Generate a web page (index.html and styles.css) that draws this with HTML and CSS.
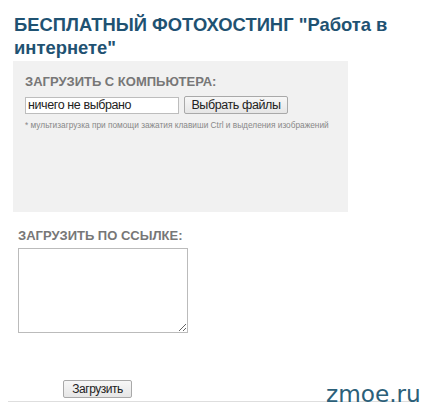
FILE: index.html
```html
<!DOCTYPE html>
<html>
<head>
<meta charset="utf-8">
<link rel="stylesheet" href="styles.css">
</head>
<body>
<div class="page">
  <h1 class="title">БЕСПЛАТНЫЙ ФОТОХОСТИНГ "Работа в интернете"</h1>
  <div class="box">
    <div class="label">ЗАГРУЗИТЬ С КОМПЬЮТЕРА:</div>
    <div class="file-row">
      <span class="file-field">ничего не выбрано</span>
      <button class="btn btn-files">Выбрать файлы</button>
    </div>
    <div class="note">* мультизагрузка при помощи зажатия клавиши Ctrl и выделения изображений</div>
  </div>
  <div class="link-section">
    <div class="label">ЗАГРУЗИТЬ ПО ССЫЛКЕ:</div>
    <textarea class="url-area"></textarea>
  </div>
  <div class="submit-row">
    <button class="btn btn-submit">Загрузить</button>
  </div>
  <div class="rule"></div>
</div>
<div class="watermark">zmoe.ru</div>
</body>
</html>
```
FILE: styles.css
```css
html, body {
  margin: 0;
  padding: 0;
  background: #fff;
}
body {
  font-family: "Liberation Sans", Arial, sans-serif;
  width: 424px;
  height: 410px;
  overflow: hidden;
  position: relative;
}
.page {
  padding: 13px 8px 0 8px;
}
.title {
  margin: 0 0 0 6px;
  font-size: 18.4px;
  line-height: 23px;
  font-weight: bold;
  color: #1f5272;
  width: 400px;
}
.box {
  margin: 2px 0 0 5px;
  width: 335px;
  height: 151px;
  box-sizing: border-box;
  background: #f1f1f1;
  padding: 13px 12px 0 12px;
}
.label {
  font-size: 13px;
  font-weight: bold;
  color: #777;
  line-height: 16px;
}
.file-row {
  display: flex;
  gap: 5px;
  margin-top: 6px;
  align-items: center;
}
.file-field {
  display: block;
  width: 154px;
  height: 17px;
  box-sizing: border-box;
  border: 1px solid #bdbdbd;
  background: #fff;
  font-size: 12.5px;
  letter-spacing: -0.4px;
  line-height: 15px;
  padding-left: 2px;
  color: #222;
  white-space: nowrap;
}
.btn {
  font-family: "Liberation Sans", Arial, sans-serif;
  background: linear-gradient(#f7f7f7, #e6e6e6);
  border: 1px solid #a9a9a9;
  border-radius: 2px;
  color: #222;
  padding: 0;
  box-sizing: border-box;
  white-space: nowrap;
}
.btn-files {
  width: 104px;
  height: 18px;
  font-size: 12.5px;
  letter-spacing: -0.4px;
  line-height: 16px;
}
.note {
  margin-top: 6px;
  font-size: 8.3px;
  color: #888;
  line-height: 10px;
  white-space: nowrap;
}
.link-section {
  margin: 16px 0 0 10px;
}
.url-area {
  display: block;
  margin-top: 4px;
  width: 170px;
  height: 85px;
  box-sizing: border-box;
  border: 1px solid #bbb;
  resize: both;
  background: #fff;
}
.submit-row {
  margin: 47px 0 0 55px;
  height: 18px;
}
.btn-submit {
  display: block;
  width: 69px;
  height: 18px;
  font-size: 12px;
  letter-spacing: -0.5px;
  line-height: 16px;
}
.rule {
  margin-top: 3px;
  height: 1px;
  background: #dedede;
  width: 408px;
}
.watermark {
  position: absolute;
  left: 326px;
  top: 380px;
  font-family: "DejaVu Sans", sans-serif;
  font-size: 23.2px;
  line-height: 27px;
  color: #2b6079;
}
```
